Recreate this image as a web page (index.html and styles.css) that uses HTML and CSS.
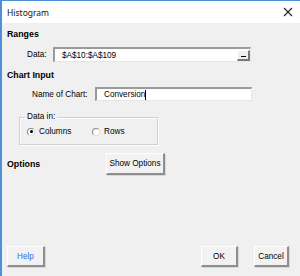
FILE: index.html
```html
<!DOCTYPE html>
<html lang="en">
<head>
	<meta charset="UTF-8">
	<title>Histogram</title>
	<link rel="stylesheet" href="styles.css">
</head>
<body>
	<div class="window">
		<div class="titlebar">
			<span class="title">Histogram</span>
			<svg class="close" width="10" height="10" viewBox="0 0 10 10">
				<path d="M1 1L9 9M9 1L1 9" stroke="#222" stroke-width="1.1" fill="none"/>
			</svg>
		</div>
		<div class="content">
			<div class="heading">Ranges</div>
			<div class="row row-data">
				<label class="lbl">Data:</label>
				<div class="field field-data">
					<span>$A$10:$A$109</span>
					<span class="pick"><i></i></span>
				</div>
			</div>

			<div class="heading heading-chart">Chart Input</div>
			<div class="row row-name">
				<label class="lbl">Name of Chart:</label>
				<div class="field field-name"><span>Conversion</span><b class="caret"></b></div>
			</div>

			<fieldset class="group">
				<legend>Data in:</legend>
				<div class="radios">
					<span class="radio checked"><i></i>Columns</span>
					<span class="radio"><i></i>Rows</span>
				</div>
			</fieldset>

			<div class="row row-options">
				<span class="heading">Options</span>
				<button class="btn btn-show">Show Options</button>
			</div>

			<div class="footer">
				<button class="btn btn-help">Help</button>
				<div class="footer-right">
					<button class="btn btn-ok">OK</button>
					<button class="btn btn-cancel">Cancel</button>
				</div>
			</div>
		</div>
	</div>
</body>
</html>
```
FILE: styles.css
```css
html, body{
	margin:0;
	padding:0;
	background:#f0f0f0;
}
.window{
	width:300px;
	height:276px;
	box-sizing:border-box;
	border-top:1px solid #4f8fd6;
	border-left:2px solid #4f8fd6;
	display:flex;
	flex-direction:column;
	font:8.2px 'Liberation Sans', Arial, sans-serif;
	color:#000;
}
.titlebar{
	height:22px;
	background:#fff;
	display:flex;
	align-items:center;
	justify-content:space-between;
	padding:0 7px 0 5px;
}
.title{
	font:8.5px 'Noto Sans', 'Open Sans', sans-serif;
	color:#111;
	margin-top:1px;
}
.close{
	display:block;
}
.content{
	flex:1;
	display:flex;
	flex-direction:column;
	padding:5px 11px 9px 5px;
	background:#f0f0f0;
}
.heading{
	font-weight:bold;
	font-size:8.8px;
	height:12px;
	line-height:12px;
}
.heading-chart{
	margin-top:7px;
}
.row{
	display:flex;
	align-items:center;
}
.row-data{
	margin-top:7px;
	padding-left:20px;
}
.row-data .lbl{
	width:26px;
}
.row-name{
	margin-top:6px;
	padding-left:25px;
}
.row-name .lbl{
	width:63px;
}
.field{
	box-sizing:border-box;
	background:#fff;
	border-top:2px solid #9a9a9a;
	border-left:2px solid #9a9a9a;
	border-right:1px solid #e6e6e6;
	border-bottom:1px solid #e6e6e6;
	display:flex;
	align-items:center;
	justify-content:space-between;
}
.field-data{
	width:198px;
	height:15px;
	padding-left:7px;
}
.field-name{
	width:157px;
	height:14px;
	padding-left:7px;
	justify-content:flex-start;
}
.caret{
	width:1px;
	height:10px;
	background:#000;
}
.pick{
	box-sizing:border-box;
	width:13px;
	height:11px;
	background:#f0f0f0;
	border-top:1px solid #fff;
	border-left:1px solid #fff;
	border-right:2px solid #7a7a7a;
	border-bottom:2px solid #7a7a7a;
	display:flex;
	justify-content:center;
	align-items:flex-end;
	padding-bottom:2px;
}
.pick i{
	width:5px;
	height:1px;
	background:#000;
}
.group{
	margin:11px 0 0 12px;
	width:122px;
	height:33px;
	box-sizing:border-box;
	border:1px solid #d0d0d0;
	box-shadow:inset 1px 1px 0 #fff, 1px 1px 0 #fff;
	padding:0 0 0 7px;
}
.group legend{
	padding:0 2px;
	margin-left:-2px;
	font-size:8.2px;
	line-height:10px;
}
.radios{
	display:flex;
	margin-top:5px;
}
.radio{
	display:flex;
	align-items:center;
	width:65px;
}
.radio i{
	box-sizing:border-box;
	width:8px;
	height:8px;
	border-radius:50%;
	background:#fff;
	border:1px solid;
	border-color:#8a8a8a #e0e0e0 #e0e0e0 #8a8a8a;
	margin-right:4px;
	display:flex;
	justify-content:center;
	align-items:center;
}
.radio.checked i::after{
	content:"";
	width:3px;
	height:3px;
	border-radius:50%;
	background:#000;
}
.row-options{
	margin-top:8px;
	justify-content:flex-start;
}
.row-options .heading{
	width:99px;
}
.btn{
	box-sizing:border-box;
	font:8.2px 'Liberation Sans', Arial, sans-serif;
	color:#000;
	background:#f2f2f2;
	border-top:1px solid #fff;
	border-left:1px solid #fff;
	border-right:2px solid #8e8e8e;
	border-bottom:2px solid #8e8e8e;
	box-shadow:1px 1px 0 #d8d8d8;
	padding:0;
	margin:0;
}
.btn-show{
	width:59px;
	height:22px;
}
.footer{
	margin-top:auto;
	display:flex;
	justify-content:space-between;
}
.footer-right{
	display:flex;
	gap:16px;
}
.btn-help{
	width:38px;
	height:21px;
	color:#2f6fd6;
}
.btn-ok{
	width:37px;
	height:21px;
}
.btn-cancel{
	width:35px;
	height:21px;
}
```
